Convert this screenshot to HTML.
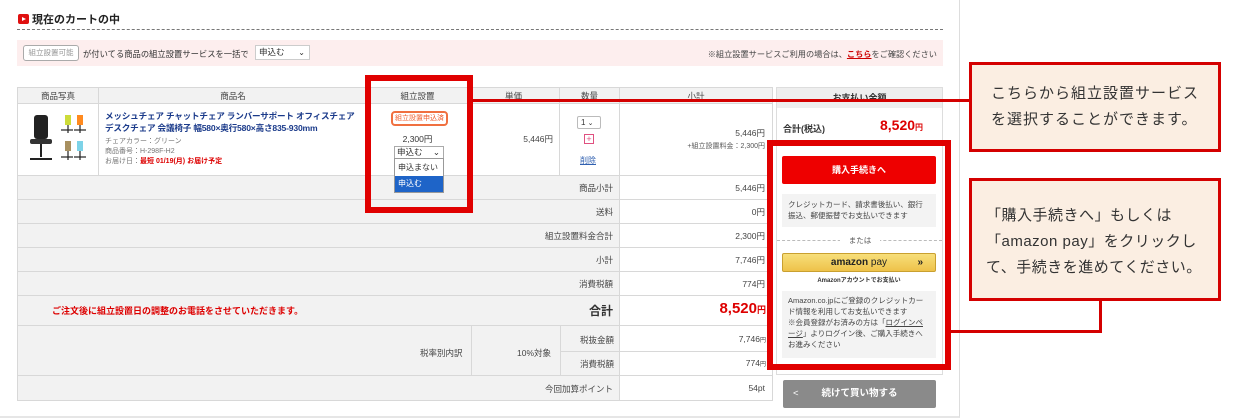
<!DOCTYPE html>
<html><head><meta charset="utf-8"><style>
*{margin:0;padding:0;box-sizing:border-box}
body{width:1236px;height:419px;background:#fff;font-family:"Liberation Sans","Noto Sans CJK JP",sans-serif;color:#333;position:relative;overflow:hidden;font-size:9px}
.a{position:absolute}
.panel{left:0;top:0;width:960px;height:418px;border-right:1px solid #ddd;border-bottom:2px solid #e6e6e6;background:#fff}
.cell{position:absolute;border:1px solid #d8d8d8;}
.gray{background:#f2f2f2}
.r{text-align:right}
.lab{position:absolute;font-size:8.5px;color:#444;white-space:nowrap}
.redbox{position:absolute;border:6px solid #e00000}
.callout{position:absolute;background:#fbeee2;border:3px solid #d40000;font-size:15px;color:#333;line-height:26px;letter-spacing:1px;white-space:nowrap}
</style></head><body>
<div class="a panel"></div>
<!-- title -->
<div class="a" style="left:18px;top:14px;width:11px;height:10px;background:#e01010;border-radius:2px"></div>
<div class="a" style="left:22px;top:17px;width:0;height:0;border-left:4px solid #fff;border-top:2.5px solid transparent;border-bottom:2.5px solid transparent"></div>
<div class="a" style="left:32px;top:11px;font-size:11px;font-weight:bold;color:#222">現在のカートの中</div>
<div class="a" style="left:17px;top:29px;width:926px;border-top:1px dashed #777"></div>
<!-- pink bar -->
<div class="a" style="left:17px;top:40px;width:926px;height:26px;background:#fdeeee"></div>
<div class="a" style="left:23px;top:45px;width:56px;height:16px;border:1.5px solid #aaa;border-radius:3px;background:#fff;font-size:7.5px;color:#999;text-align:center;line-height:13px;white-space:nowrap">組立設置可能</div>
<div class="a" style="left:83px;top:48px;font-size:8.3px;white-space:nowrap">が付いてる商品の組立設置サービスを一括で</div>
<div class="a" style="left:255px;top:45px;width:55px;height:15px;border:1px solid #ccc;background:#fff;font-size:8.5px;line-height:13px;padding-left:3px">申込む<span style="position:absolute;right:4px;font-size:8px">⌄</span></div>
<div class="a" style="right:299px;top:48px;font-size:8.2px;color:#444;white-space:nowrap">※組立設置サービスご利用の場合は、<span style="color:#c00;text-decoration:underline;font-weight:bold">こちら</span>をご確認ください</div>

<!-- table header -->
<div class="cell gray" style="left:17px;top:87px;width:82px;height:17px"></div>
<div class="cell gray" style="left:98px;top:87px;width:270px;height:17px"></div>
<div class="cell gray" style="left:367px;top:87px;width:101px;height:17px"></div>
<div class="cell gray" style="left:467px;top:87px;width:93px;height:17px"></div>
<div class="cell gray" style="left:559px;top:87px;width:61px;height:17px"></div>
<div class="cell gray" style="left:619px;top:87px;width:154px;height:17px"></div>
<div class="lab" style="left:17px;top:90px;width:82px;text-align:center">商品写真</div>
<div class="lab" style="left:98px;top:90px;width:270px;text-align:center">商品名</div>
<div class="lab" style="left:367px;top:90px;width:101px;text-align:center">組立設置</div>
<div class="lab" style="left:467px;top:90px;width:93px;text-align:center">単価</div>
<div class="lab" style="left:559px;top:90px;width:61px;text-align:center">数量</div>
<div class="lab" style="left:619px;top:90px;width:154px;text-align:center">小計</div>
<!-- product row -->
<div class="cell" style="left:17px;top:103px;width:82px;height:73px"></div>
<div class="cell" style="left:98px;top:103px;width:270px;height:73px"></div>
<div class="cell" style="left:367px;top:103px;width:101px;height:73px"></div>
<div class="cell" style="left:467px;top:103px;width:93px;height:73px"></div>
<div class="cell" style="left:559px;top:103px;width:61px;height:73px"></div>
<div class="cell" style="left:619px;top:103px;width:154px;height:73px"></div>
<!-- chair image -->
<svg class="a" style="left:28px;top:113px" width="62" height="52" viewBox="0 0 62 52">
<rect x="6" y="2" width="14" height="24" rx="3" fill="#222"/><rect x="2" y="26" width="22" height="5" rx="2" fill="#333"/><line x1="13" y1="31" x2="13" y2="44" stroke="#222" stroke-width="2"/><line x1="2" y1="46" x2="24" y2="46" stroke="#222" stroke-width="2"/>
<rect x="37" y="2" width="6" height="10" fill="#cddc39"/><rect x="49" y="2" width="6" height="10" fill="#ff8a1f"/><rect x="37" y="28" width="6" height="10" fill="#a89060"/><rect x="49" y="28" width="6" height="10" fill="#7dd3e8"/>
<g stroke="#222" stroke-width="1.2"><line x1="33" y1="17" x2="45" y2="17"/><line x1="46" y1="17" x2="58" y2="17"/><line x1="33" y1="44" x2="45" y2="44"/><line x1="46" y1="44" x2="58" y2="44"/><line x1="40" y1="12" x2="40" y2="20"/><line x1="52" y1="12" x2="52" y2="20"/><line x1="40" y1="38" x2="40" y2="47"/><line x1="52" y1="38" x2="52" y2="47"/></g></svg>
<div class="a" style="left:105px;top:110px;font-size:8.6px;font-weight:bold;color:#1a3a8a;line-height:12px;white-space:nowrap;letter-spacing:-0.2px">メッシュチェア チャットチェア ランバーサポート オフィスチェア<br>デスクチェア 会議椅子 幅580×奥行580×高さ835-930mm</div>
<div class="a" style="left:105px;top:137px;font-size:7px;color:#777;line-height:10px;white-space:nowrap">チェアカラー：グリーン<br>商品番号：H-298F-H2<br>お届け日：<b style="color:#d00">最短 01/19(月) お届け予定</b></div>
<div class="a" style="left:391px;top:111px;width:57px;height:15px;border:2px solid #f07040;border-radius:4px;font-size:7px;color:#f06030;text-align:center;line-height:11px;white-space:nowrap">組立設置申込済</div>
<div class="a" style="left:367px;top:133px;width:101px;text-align:center;font-size:8.5px">2,300円</div>
<div class="a" style="left:394px;top:146px;width:50px;height:13px;border:1px solid #aaa;background:#fff;font-size:8.5px;line-height:11px;padding-left:2px">申込む<span style="position:absolute;right:3px">⌄</span></div>
<div class="a" style="left:394px;top:158px;width:50px;height:35px;border:1px solid #999;background:#fff;font-size:8px;z-index:3">
<div style="height:17px;line-height:17px;padding-left:3px">申込まない</div><div style="height:16px;line-height:16px;padding-left:3px;background:#1e64c8;color:#fff">申込む</div></div>
<div class="lab" style="left:467px;top:133px;width:86px;text-align:right">5,446円</div>
<div class="a" style="left:577px;top:116px;width:24px;height:13px;border:1px solid #bbb;border-radius:2px;font-size:8px;line-height:11px;padding-left:3px">1 <span style="font-size:7px">⌄</span></div>
<div class="a" style="left:584px;top:134px;width:10px;height:10px;border:1px solid #e05080;color:#e05080;font-size:9px;line-height:8px;text-align:center">+</div>
<div class="a" style="left:580px;top:155px;font-size:8px;color:#3060b0;text-decoration:underline">削除</div>
<div class="lab" style="left:619px;top:127px;width:146px;text-align:right">5,446円</div>
<div class="a" style="left:619px;top:141px;width:146px;text-align:right;font-size:7px;color:#555">+組立設置料金：2,300円</div>

<!-- summary rows -->
<div class="cell gray" style="left:17px;top:175px;width:603px;height:25px"></div><div class="cell" style="left:619px;top:175px;width:154px;height:25px"></div>
<div class="cell gray" style="left:17px;top:199px;width:603px;height:25px"></div><div class="cell" style="left:619px;top:199px;width:154px;height:25px"></div>
<div class="cell gray" style="left:17px;top:223px;width:603px;height:25px"></div><div class="cell" style="left:619px;top:223px;width:154px;height:25px"></div>
<div class="cell gray" style="left:17px;top:247px;width:603px;height:25px"></div><div class="cell" style="left:619px;top:247px;width:154px;height:25px"></div>
<div class="cell gray" style="left:17px;top:271px;width:603px;height:25px"></div><div class="cell" style="left:619px;top:271px;width:154px;height:25px"></div>
<div class="cell gray" style="left:17px;top:295px;width:603px;height:31px"></div><div class="cell" style="left:619px;top:295px;width:154px;height:31px"></div>
<div class="cell gray" style="left:17px;top:325px;width:455px;height:51px"></div>
<div class="cell gray" style="left:471px;top:325px;width:90px;height:51px"></div>
<div class="cell gray" style="left:560px;top:325px;width:60px;height:27px"></div><div class="cell" style="left:619px;top:325px;width:154px;height:27px"></div>
<div class="cell gray" style="left:560px;top:351px;width:60px;height:25px"></div><div class="cell" style="left:619px;top:351px;width:154px;height:25px"></div>
<div class="cell gray" style="left:17px;top:375px;width:603px;height:26px"></div><div class="cell" style="left:619px;top:375px;width:154px;height:26px"></div>
<div class="lab r" style="left:400px;top:182px;width:213px">商品小計</div><div class="lab r" style="left:620px;top:182px;width:145px">5,446円</div>
<div class="lab r" style="left:400px;top:206px;width:213px">送料</div><div class="lab r" style="left:620px;top:206px;width:145px">0円</div>
<div class="lab r" style="left:400px;top:230px;width:213px">組立設置料金合計</div><div class="lab r" style="left:620px;top:230px;width:145px">2,300円</div>
<div class="lab r" style="left:400px;top:254px;width:213px">小計</div><div class="lab r" style="left:620px;top:254px;width:145px">7,746円</div>
<div class="lab r" style="left:400px;top:278px;width:213px">消費税額</div><div class="lab r" style="left:620px;top:278px;width:145px">774円</div>
<div class="a" style="left:52px;top:304px;font-size:9px;font-weight:bold;color:#d00;white-space:nowrap">ご注文後に組立設置日の調整のお電話をさせていただきます。</div>
<div class="a r" style="left:400px;top:302px;width:213px;font-size:12px;font-weight:bold">合計</div>
<div class="a r" style="left:620px;top:300px;width:146px;font-size:15px;font-weight:bold;color:#d00">8,520<span style="font-size:9px">円</span></div>
<div class="lab" style="left:420px;top:347px">税率別内訳</div>
<div class="lab" style="left:517px;top:347px">10%対象</div>
<div class="lab r" style="left:560px;top:334px;width:54px">税抜金額</div><div class="lab r" style="left:620px;top:334px;width:146px">7,746<span style="font-size:6px">円</span></div>
<div class="lab r" style="left:560px;top:358px;width:54px">消費税額</div><div class="lab r" style="left:620px;top:358px;width:146px">774<span style="font-size:6px">円</span></div>
<div class="lab r" style="left:400px;top:383px;width:213px">今回加算ポイント</div><div class="lab r" style="left:620px;top:383px;width:145px">54pt</div>

<!-- right panel -->
<div class="a" style="left:776px;top:87px;width:167px;height:288px;border:1px solid #ddd;background:#fff"></div>
<div class="a" style="left:777px;top:88px;width:165px;height:20px;background:#eee;text-align:center;font-size:9px;font-weight:bold;line-height:20px">お支払い金額</div>
<div class="a" style="left:783px;top:122px;font-size:9px;font-weight:bold">合計(税込)</div>
<div class="a" style="left:880px;top:117px;font-size:14px;font-weight:bold;color:#d00">8,520<span style="font-size:8px">円</span></div>
<div class="a" style="left:782px;top:156px;width:154px;height:28px;background:#e00;border-radius:2px;color:#fff;font-size:9px;font-weight:bold;text-align:center;line-height:28px">購入手続きへ</div>
<div class="a" style="left:782px;top:194px;width:154px;height:33px;background:#f3f3f3;font-size:7.5px;line-height:11px;padding:5px 6px;color:#444">クレジットカード、請求書後払い、銀行振込、郵便振替でお支払いできます</div>
<div class="a" style="left:777px;top:240px;width:165px;border-top:1px dashed #bbb"></div>
<div class="a" style="left:840px;top:235px;width:40px;background:#fff;text-align:center;font-size:7.5px;color:#555">または</div>
<div class="a" style="left:782px;top:253px;width:154px;height:19px;background:linear-gradient(#f7df7a,#eec24a);border:1px solid #c9a030;border-radius:2px;font-size:10px;line-height:17px;text-align:center;color:#222"><b>amazon</b> pay<span style="position:absolute;right:12px;font-weight:bold">»</span></div>
<div class="a" style="left:782px;top:275px;width:154px;text-align:center;font-size:6px;font-weight:bold">Amazonアカウントでお支払い</div>
<div class="a" style="left:782px;top:291px;width:154px;height:67px;background:#f3f3f3;font-size:7.5px;line-height:11px;padding:4px 6px;color:#444">Amazon.co.jpにご登録のクレジットカード情報を利用してお支払いできます<br>※会員登録がお済みの方は「<u>ログインページ</u>」よりログイン後、ご購入手続きへお進みください</div>
<div class="a" style="left:783px;top:380px;width:153px;height:28px;background:#8a8a8a;border-radius:2px;color:#fff;font-size:9.5px;font-weight:bold;line-height:28px;text-align:center">続けて買い物する<span style="position:absolute;left:10px;font-weight:normal">&lt;</span></div>

<!-- annotation red boxes & lines -->
<div class="redbox" style="left:365px;top:75px;width:108px;height:138px"></div>
<div class="redbox" style="left:767px;top:140px;width:184px;height:230px"></div>
<div class="a" style="left:472px;top:99px;width:499px;height:3px;background:#d40000"></div>
<div class="a" style="left:950px;top:330px;width:152px;height:3px;background:#d40000"></div>
<div class="a" style="left:1099px;top:298px;width:3px;height:35px;background:#d40000"></div>
<div class="callout" style="left:969px;top:62px;width:252px;height:90px;padding:16px 0 0 19px">こちらから組立設置サービス<br>を選択することができます。</div>
<div class="callout" style="left:969px;top:178px;width:252px;height:123px;padding:22px 0 0 14px;letter-spacing:0.5px">「購入手続きへ」もしくは<br>「amazon pay」をクリックし<br>て、手続きを進めてください。</div>
</body></html>
